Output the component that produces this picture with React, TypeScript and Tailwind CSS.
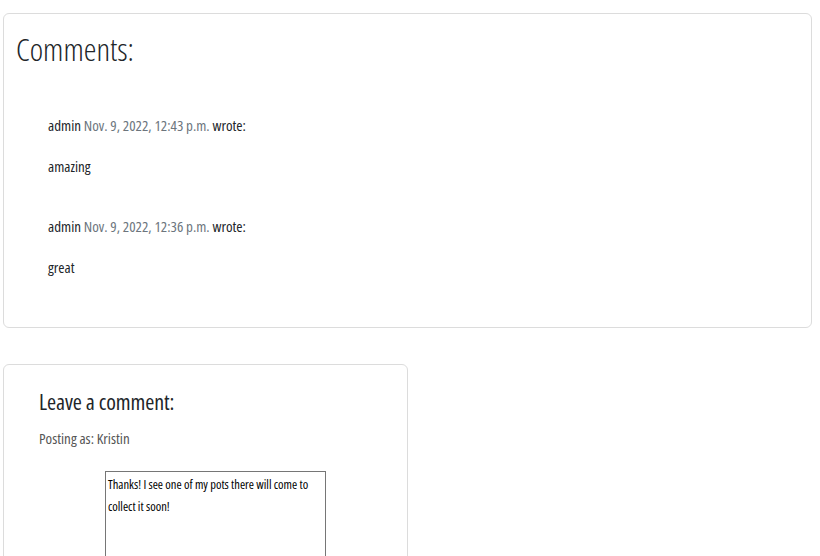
import React from 'react';

const comments = [
  { author: 'admin', date: 'Nov. 9, 2022, 12:43 p.m.', body: 'amazing' },
  { author: 'admin', date: 'Nov. 9, 2022, 12:36 p.m.', body: 'great' },
];

const font = { fontFamily: '"Open Sans", "DejaVu Sans", sans-serif' };

const App = () => {
  return (
    <div className="bg-white px-[3px] pt-[13px] text-[#212529] font-stretch-condensed" style={font}>
      <div className="w-[809px] rounded-md border border-[#dcdcdc] px-3 pt-[15px] pb-[50px]">
        <h2 className="text-[32px] leading-[40px] font-light">Comments:</h2>
        <div className="mt-[46px] pl-8">
          {comments.map((c, i) => (
            <div key={i} className={i > 0 ? 'mt-[40px]' : ''}>
              <p className="text-[15px] leading-5">
                {c.author} <span className="text-[#6c757d]">{c.date}</span> wrote:
              </p>
              <p className="mt-[21px] text-[15px] leading-5">{c.body}</p>
            </div>
          ))}
        </div>
      </div>

      <div className="mt-[36px] h-[200px] w-[405px] rounded-md border border-[#dcdcdc] px-[35px] pt-[21px]">
        <h3 className="text-[22px] leading-[30px] font-medium tracking-[-0.1px]">Leave a comment:</h3>
        <p className="mt-[12px] text-[15px] leading-5 text-[#555]">Posting as: Kristin</p>
        <div className="mt-[23px] pl-[66px]">
          <textarea
            className="h-[120px] w-[221px] resize-none border border-[#767676] px-[2px] pt-[2px] text-[12.5px] leading-[22px] font-medium text-black outline-none font-stretch-condensed"
            style={font}
            defaultValue="Thanks! I see one of my pots there will come to collect it soon!"
          />
        </div>
      </div>
    </div>
  );
};

export default App;
